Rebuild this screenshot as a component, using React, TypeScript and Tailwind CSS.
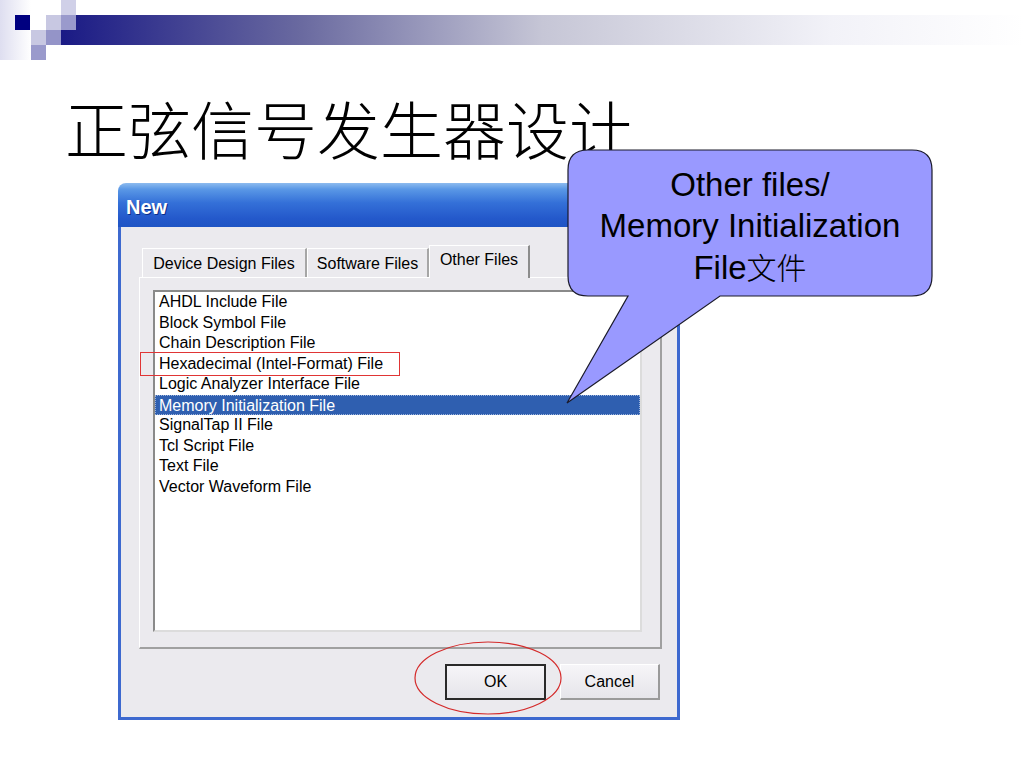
import React from "react";

const items = [
  "AHDL Include File",
  "Block Symbol File",
  "Chain Description File",
  "Hexadecimal (Intel-Format) File",
  "Logic Analyzer Interface File",
  "Memory Initialization File",
  "SignalTap II File",
  "Tcl Script File",
  "Text File",
  "Vector Waveform File",
];

function HeaderDecor() {
  return (
    <svg width="1024" height="60" viewBox="0 0 1024 60" className="block">
      <defs>
        <linearGradient id="barGrad" x1="61" x2="1024" y1="0" y2="0" gradientUnits="userSpaceOnUse">
          <stop offset="0" stopColor="#1a1a85" />
          <stop offset="0.25" stopColor="#6a6aa0" />
          <stop offset="0.5" stopColor="#c6c6d6" />
          <stop offset="0.8" stopColor="#f2f2f8" />
          <stop offset="1" stopColor="#ffffff" />
        </linearGradient>
        <linearGradient id="paleGrad" x1="0" x2="1" y1="0" y2="0">
          <stop offset="0" stopColor="#dedef0" />
          <stop offset="1" stopColor="#ffffff" />
        </linearGradient>
      </defs>
      <rect x="0" y="0" width="31" height="60" fill="url(#paleGrad)" />
      <rect x="61" y="15" width="963" height="30" fill="url(#barGrad)" />
      <rect x="15" y="15" width="15" height="15" fill="#000080" />
      <rect x="46" y="15" width="15" height="15" fill="#c8c8e2" />
      <rect x="61" y="0" width="15" height="15" fill="#d0d0e8" />
      <rect x="61" y="15" width="15" height="15" fill="#9a9acc" />
      <rect x="31" y="30" width="15" height="15" fill="#c8c8e2" />
      <rect x="46" y="30" width="15" height="15" fill="#9494c8" />
      <rect x="31" y="45" width="15" height="15" fill="#9a9acc" />
    </svg>
  );
}

function Dialog() {
  return (
    <div className="ml-[118px] mt-[25px] w-[562px] h-[537px] flex flex-col">
      <div className="h-[44px] rounded-t-[8px] bg-[linear-gradient(180deg,#8dbbef_0%,#5a98e6_14%,#3470d8_45%,#2459cb_80%,#1f54c4_100%)] flex items-center pl-[8px] pt-[3px]">
        <span className="text-white font-bold text-[20px] [text-shadow:1px_1px_0_#0b2f8a]">New</span>
      </div>
      <div className="flex-1 border-x-[3px] border-b-[3px] border-[#3d69cf] bg-[#ebeaee] pt-[18px] pl-[18px] flex flex-col">
        <div className="flex items-end h-[32px] pl-[3px] text-[16px] text-black">
          <div className="w-[165px] h-[29px] border-t border-l border-white border-r-2 border-r-[#a6a6a6] flex items-center justify-center pt-[2px] bg-[#ebeaee]">
            Device Design Files
          </div>
          <div className="w-[122px] h-[29px] border-t border-l border-white border-r-2 border-r-[#a6a6a6] flex items-center justify-center pt-[2px] bg-[#ebeaee]">
            Software Files
          </div>
          <div className="relative z-10 -mb-px w-[101px] h-[33px] border-t border-l border-white border-r-2 border-r-[#8c8c8c] flex items-center justify-center pb-[4px] bg-[#ebeaee]">
            Other Files
          </div>
        </div>
        <div className="w-[523px] h-[372px] border-t border-l border-white border-r-2 border-b-2 border-r-[#a0a0a0] border-b-[#a0a0a0] pt-[12px] pl-[13px]">
          <div className="w-[489px] h-[342px] bg-white border-2 border-t-[#8a8a8a] border-l-[#8a8a8a] border-r-[#dcdcdc] border-b-[#dcdcdc] text-[16px] leading-[20.5px] text-black">
            {items.map((it) =>
              it === "Memory Initialization File" ? (
                <div key={it} className="h-[20.5px] bg-[#2f5fb0] text-white pl-[3px] border border-dotted border-[#9cb4dc]">
                  {it}
                </div>
              ) : (
                <div key={it} className="h-[20.5px] pl-[4px]">
                  {it}
                </div>
              )
            )}
          </div>
        </div>
        <div className="mt-[15px] flex gap-[14px] pl-[306px] text-[16px] text-black">
          <button className="w-[101px] h-[36px] border-2 border-[#2a2a2a] bg-[linear-gradient(180deg,#f6f5f8,#e6e5ea)] flex items-center justify-center">
            OK
          </button>
          <button className="w-[100px] h-[36px] border-t border-l border-white border-r-2 border-b-2 border-r-[#9a9a9a] border-b-[#9a9a9a] bg-[linear-gradient(180deg,#f6f5f8,#e6e5ea)] flex items-center justify-center">
            Cancel
          </button>
        </div>
      </div>
    </div>
  );
}

function Callout() {
  return (
    <>
      <svg width="380" height="265" viewBox="0 0 380 265" className="absolute left-[560px] top-[145px]">
        <path
          d="M 28 5 H 352 Q 372 5 372 25 V 131 Q 372 151 352 151 H 160 L 7 258 L 68 151 H 28 Q 8 151 8 131 V 25 Q 8 5 28 5 Z"
          fill="#9999ff"
          stroke="#1a1a2a"
          strokeWidth="1.2"
        />
      </svg>
      <div className="absolute left-[568px] top-[150px] w-[364px] pt-[15px] text-center text-[33px] leading-[40.5px] text-black">
        <div>Other files/</div>
        <div>Memory Initialization</div>
        <div>
          File<span className="font-['Noto_Sans_CJK_SC'] font-light text-[30px]">文件</span>
        </div>
      </div>
    </>
  );
}

export default function App() {
  return (
    <div className="relative w-[1024px] h-[768px] bg-white overflow-hidden font-['Liberation_Sans','Noto_Sans_CJK_SC',sans-serif]">
      <HeaderDecor />
      <h1 className="ml-[65px] mt-[35px] h-[63px] text-[63px] leading-[63px] font-extralight text-black font-['Noto_Sans_CJK_SC',sans-serif]">
        正弦信号发生器设计
      </h1>
      <Dialog />
      <div className="absolute left-[140px] top-[352px] w-[260px] h-[24px] border border-[#e03535]" />
      <svg width="150" height="76" viewBox="0 0 150 76" className="absolute left-[414px] top-[641px]">
        <ellipse cx="74" cy="37" rx="73" ry="36" fill="none" stroke="#d42a2a" strokeWidth="1.2" />
      </svg>
      <Callout />
    </div>
  );
}
